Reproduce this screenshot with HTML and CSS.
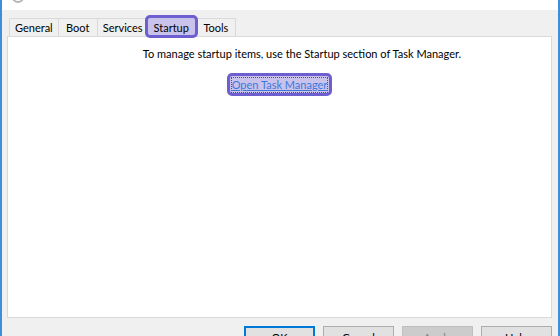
FILE: index.html
```html
<!DOCTYPE html>
<html lang="en">
<head>
    <meta charset="UTF-8">
    <title>System Configuration</title>
    <link rel="stylesheet" href="styles.css">
</head>
<body>
    <div class="window">
        <div class="titlebar">
            <span class="app-icon"></span>
            <span class="title">System Configuration</span>
        </div>

        <div class="content">
            <div class="tabs">
                <span class="tab">General</span>
                <span class="tab">Boot</span>
                <span class="tab">Services</span>
                <span class="tab active">Startup</span>
                <span class="tab">Tools</span>
            </div>

            <div class="panel">
                <p class="message">To manage startup items, use the Startup section of Task Manager.</p>
                <div class="link-row">
                    <span class="mark">
                        <a href="#" class="link">Open Task Manager</a>
                    </span>
                </div>
            </div>

            <div class="buttons">
                <button class="default">OK</button>
                <button>Cancel</button>
                <button disabled>Apply</button>
                <button>Help</button>
            </div>
        </div>
    </div>
</body>
</html>
```

FILE: styles.css
```css
body {
    margin: 0;
    background-color: #f0f0f0;
    font-family: Lato, "Noto Sans", sans-serif;
    font-size: 11px;
    color: #000;
}

.window {
    height: 336px;
    overflow: hidden;
    border-left: 2px solid #3d8fdb;
    border-right: 2px solid #3d8fdb;
    box-sizing: border-box;
}

.titlebar {
    height: 10px;
    background-color: #fff;
    overflow: hidden;
    display: flex;
    align-items: flex-end;
    padding-left: 10px;
}

.app-icon {
    width: 12px;
    height: 12px;
    border-radius: 50%;
    border: 2px solid #b5b5b5;
    margin-bottom: 7px;
    box-sizing: border-box;
}

.title {
    margin-left: 8px;
    line-height: 14px;
    margin-bottom: 10px;
    font-size: 13px;
    color: #444;
}

.content {
    padding: 8px 6px 0 5px;
}

.tabs {
    display: flex;
    height: 18px;
    padding-left: 2px;
}

.tab {
    min-width: 40px;
    height: 18px;
    line-height: 18px;
    padding: 0 5px;
    border: 1px solid #d9d9d9;
    border-bottom: none;
    margin-right: -1px;
    box-sizing: border-box;
    background-color: #f0f0f0;
    text-align: center;
}

.tab.active {
    height: 23px;
    margin: -3px -2px -2px -3px;
    line-height: 20px;
    background-color: #c9c3ec;
    border: 3px solid #6d5fcf;
    border-radius: 5px;
    padding: 0 6px;
    position: relative;
    z-index: 1;
}

.panel {
    height: 282px;
    background-color: #fff;
    border: 1px solid #d9d9d9;
    box-sizing: border-box;
}

.message {
    margin: 10px 0 0;
    padding-left: 45px;
    text-align: center;
    line-height: 14px;
}

.link-row {
    display: flex;
    justify-content: center;
    margin-top: 12px;
}

.mark {
    border: 3px solid #6d5fcf;
    border-radius: 5px;
    background-color: #c9c3ec;
    padding: 1px 1px 0;
}

.link {
    display: block;
    color: #3a78dc;
    line-height: 14px;
    border: 1px dotted #555;
}

.buttons {
    display: flex;
    justify-content: flex-end;
    gap: 8px;
    margin-top: 8px;
}

button {
    width: 71px;
    height: 23px;
    font-family: Lato, "Noto Sans", sans-serif;
    font-size: 11px;
    background-color: #e1e1e1;
    border: 1px solid #adadad;
}

button.default {
    border: 2px solid #0078d7;
}

button:disabled {
    background-color: #cccccc;
    border-color: #bfbfbf;
    color: #838383;
}
```
